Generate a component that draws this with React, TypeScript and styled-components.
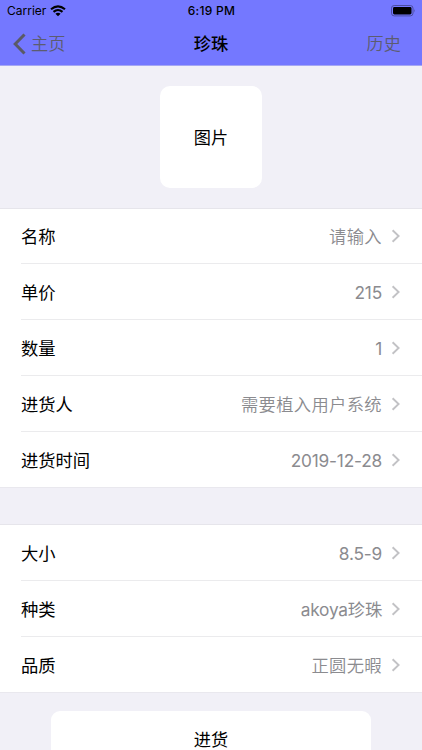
import React from "react";
import styled, { createGlobalStyle } from "styled-components";

const GlobalStyle = createGlobalStyle`
  * { box-sizing: border-box; }
  html, body { margin: 0; padding: 0; }
  body {
    background: #f1f0f7;
    font-family: Inter, "Noto Sans CJK SC", sans-serif;
    color: #000;
  }
`;

const Screen = styled.main`
  width: 422px;
  height: 750px;
  overflow: hidden;
  display: flex;
  flex-direction: column;
  background: #f1f0f7;
`;

const Header = styled.header`
  flex: none;
  height: 66px;
  background: #7478ff;
  border-bottom: 1px solid #a5a7f3;
`;

const StatusBar = styled.div`
  height: 22px;
  padding: 0 6px 0 7px;
  display: grid;
  grid-template-columns: 1fr auto 1fr;
  align-items: center;
  font-size: 12px;
  line-height: 22px;
`;

const Carrier = styled.div`
  display: flex;
  align-items: center;
  gap: 4px;
  letter-spacing: 0;
`;

const Clock = styled.div`
  font-weight: 550;
  letter-spacing: 0.3px;
`;

const BatterySlot = styled.div`
  display: flex;
  justify-content: flex-end;
`;

const NavBar = styled.nav`
  height: 43px;
  padding: 0 21px 0 13px;
  display: grid;
  grid-template-columns: 1fr auto 1fr;
  align-items: center;
  font-size: 17.2px;
  line-height: 24px;
`;

const NavAction = styled.button<{ $end?: boolean }>`
  display: flex;
  align-items: center;
  justify-self: ${(p) => (p.$end ? "end" : "start")};
  gap: 4px;
  border: 0;
  padding: 0;
  background: none;
  font: inherit;
  font-weight: 350;
  color: #5c5c70;
`;

const Title = styled.h1`
  margin: 0 0 0 8px;
  font-size: 17.2px;
  font-weight: 500;
`;

const PhotoArea = styled.section`
  flex: none;
  height: 142px;
  padding-top: 20px;
  display: flex;
  justify-content: center;
  align-items: flex-start;
`;

const PhotoButton = styled.button`
  width: 102px;
  height: 102px;
  border: 0;
  border-radius: 10px;
  padding: 0 0 2px;
  background: #fff;
  font: inherit;
  font-size: 17.2px;
  color: #000;
`;

const Group = styled.section`
  flex: none;
  background: #fff;
  box-shadow: inset 0 1px #e6e5eb, inset 0 -1px #e9e8ee;
  margin-bottom: 36px;

  & + & {
    padding-top: 1px;
    margin-bottom: 18px;
  }
`;

const Row = styled.div`
  height: 56px;
  margin-left: 21px;
  padding-right: 21px;
  display: flex;
  align-items: center;
  font-size: 17.3px;
  line-height: 24px;

  &:not(:last-child) { box-shadow: inset 0 -1px #ebebed; }
`;

const Label = styled.span`
  flex: 1;
  padding-top: 2px;
`;

const Value = styled.span<{ $latin?: boolean }>`
  padding-top: 2px;
  margin-right: 9px;
  color: #8b8b8f;
  font-weight: ${(p) => (p.$latin ? 400 : 350)};
  letter-spacing: ${(p) => (p.$latin ? "-0.2px" : "0.35px")};
`;

const SubmitButton = styled.button`
  flex: none;
  align-self: center;
  width: 320px;
  height: 57px;
  border: 0;
  border-radius: 9px;
  padding: 0 0 2px;
  background: #fff;
  font: inherit;
  font-size: 17.2px;
  color: #000;
`;

const Wifi = () => (
  <svg width="16" height="12" viewBox="0 0 16 12">
    <path d="M8 11.3 5.4 8.7Q8 6.7 10.6 8.7Z" />
    <path d="M1 4.3Q8-1.7 15 4.3M3.5 6.9Q8 3.1 12.5 6.9" fill="none" stroke="#000" strokeWidth="2.1" />
  </svg>
);

const Battery = () => (
  <svg width="25" height="12" viewBox="0 0 25 12">
    <rect x=".5" y=".5" width="21.5" height="10.4" rx="2.7" fill="none" stroke="#4b4da0" />
    <rect x="2" y="2" width="18.5" height="7.4" rx="1.4" />
    <path d="M23.3 4q1.4 1.8 0 3.5Z" fill="#4b4da0" />
  </svg>
);

const BackChevron = () => (
  <svg width="14" height="22" viewBox="0 0 14 22">
    <path d="M11.5 1.5 2.2 11l9.3 9.5" fill="none" stroke="#5a5a66" strokeWidth="3" />
  </svg>
);

const RowChevron = () => (
  <svg width="10" height="14" viewBox="0 0 10 14">
    <path d="m1.6 1.2 6 5.8-6 5.8" fill="none" stroke="#c2c2c5" strokeWidth="1.9" />
  </svg>
);

type Item = { label: string; value: string };

const stockItems: Item[] = [
  { label: "名称", value: "请输入" },
  { label: "单价", value: "215" },
  { label: "数量", value: "1" },
  { label: "进货人", value: "需要植入用户系统" },
  { label: "进货时间", value: "2019-12-28" },
];

const detailItems: Item[] = [
  { label: "大小", value: "8.5-9" },
  { label: "种类", value: "akoya珍珠" },
  { label: "品质", value: "正圆无暇" },
];

const ItemGroup = ({ items }: { items: Item[] }) => (
  <Group>
    {items.map(({ label, value }) => (
      <Row key={label}>
        <Label>{label}</Label>
        <Value $latin={/^[\x20-\x7e]/.test(value)}>{value}</Value>
        <RowChevron />
      </Row>
    ))}
  </Group>
);

export default function App() {
  return (
    <>
      <GlobalStyle />
      <Screen>
        <Header>
          <StatusBar>
            <Carrier>Carrier <Wifi /></Carrier>
            <Clock>6:19 PM</Clock>
            <BatterySlot><Battery /></BatterySlot>
          </StatusBar>
          <NavBar>
            <NavAction><BackChevron />主页</NavAction>
            <Title>珍珠</Title>
            <NavAction $end>历史</NavAction>
          </NavBar>
        </Header>
        <PhotoArea><PhotoButton>图片</PhotoButton></PhotoArea>
        <ItemGroup items={stockItems} />
        <ItemGroup items={detailItems} />
        <SubmitButton>进货</SubmitButton>
      </Screen>
    </>
  );
}
